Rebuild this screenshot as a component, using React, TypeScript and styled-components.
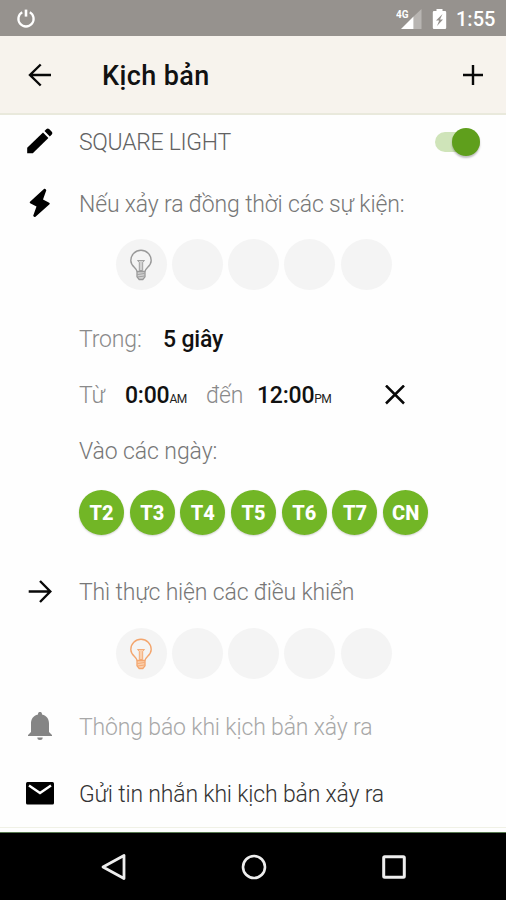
import React from "react";
import styled, { createGlobalStyle } from "styled-components";

const GlobalStyle = createGlobalStyle`
  * { box-sizing: border-box; }
  body { margin: 0; background: #fefefe; font-family: Roboto, "Noto Sans", sans-serif; }
  svg { display: block; flex: none; }
`;

const Screen = styled.div`
  width: 506px;
  height: 900px;
  display: flex;
  flex-direction: column;
  overflow: hidden;
  background: #fefefe;
`;

const StatusBar = styled.div`
  height: 36px;
  flex: none;
  display: flex;
  align-items: center;
  padding: 1px 11px 0 16px;
  background: #96928e;
  color: #fff;
`;

const StatusIcons = styled.div`
  margin-left: auto;
  display: flex;
  align-items: center;
  gap: 9px;
`;

const Clock = styled.span`
  width: 39px;
  font-size: 20px;
  line-height: 24px;
  font-weight: 500;
  white-space: nowrap;
`;

const Header = styled.header`
  height: 79px;
  flex: none;
  display: flex;
  align-items: center;
  padding: 1px 22px 0 28px;
  background: #f7f3ed;
  border-bottom: 2px solid #e9e9dc;
`;

const Title = styled.h1`
  margin: 1px auto 0 50px;
  font-size: 27px;
  line-height: 32px;
  font-weight: 500;
  letter-spacing: 0.4px;
  color: #111;
`;

const Content = styled.main`
  height: 713px;
  flex: none;
  display: flex;
  flex-direction: column;
  border-bottom: 1px solid #f0f1e6;
`;

const Row = styled.div<{ $h: number; $top?: number }>`
  height: ${(p) => p.$h}px;
  margin-top: ${(p) => p.$top ?? 0}px;
  flex: none;
  display: flex;
  align-items: center;
  padding-right: 25px;
`;

const IconSlot = styled.div`
  width: 79px;
  flex: none;
  display: flex;
  justify-content: center;
`;

const Label = styled.span<{ $color?: string; $spacing?: number }>`
  padding-top: 2px;
  font-size: 23px;
  line-height: 30px;
  font-weight: 300;
  white-space: pre;
  color: ${(p) => p.$color ?? "#777"};
  letter-spacing: ${(p) => p.$spacing ?? -0.16}px;
`;

const Field = styled.div<{ $w: number }>`
  width: ${(p) => p.$w}px;
  display: flex;
  align-items: baseline;
`;

const Value = styled.span`
  padding-top: 2px;
  font-size: 23px;
  line-height: 30px;
  font-weight: 500;
  letter-spacing: -0.2px;
  color: #111;
  white-space: nowrap;
`;

const Meridiem = styled.small`
  font-size: 12px;
  font-weight: 400;
  color: #222;
  letter-spacing: -0.6px;
`;

const Track = styled.div`
  width: 45px;
  height: 20px;
  margin: 0 1px 0 auto;
  display: flex;
  align-items: center;
  justify-content: flex-end;
  border-radius: 10px;
  background: #cfe4b9;
`;

const Thumb = styled.div`
  width: 28px;
  height: 28px;
  flex: none;
  border-radius: 50%;
  background: #5f9f1c;
  box-shadow: 0 2px 2px rgba(0, 0, 0, 0.25);
`;

const Slots = styled.div<{ $top?: number }>`
  margin-top: ${(p) => p.$top ?? 0}px;
  flex: none;
  display: flex;
  gap: 5.3px;
  padding-left: 115.5px;
`;

const Slot = styled.div`
  width: 51px;
  height: 51px;
  display: flex;
  align-items: center;
  justify-content: center;
  border-radius: 50%;
  background: #f4f4f4;
`;

const Days = styled.div`
  height: 67px;
  flex: none;
  display: flex;
  align-items: center;
  gap: 5.7px;
  padding-left: 79px;
`;

const Day = styled.div`
  width: 45px;
  height: 45px;
  display: flex;
  align-items: center;
  justify-content: center;
  border-radius: 50%;
  background: #72b626;
  color: #fff;
  font-size: 20px;
  font-weight: 800;
  box-shadow: 0 1px 2px rgba(0, 0, 0, 0.18);
`;

const NavBar = styled.nav`
  height: 68px;
  margin-top: auto;
  flex: none;
  display: flex;
  align-items: center;
  justify-content: center;
  gap: 114px;
  border-top: 1px solid #587a50;
  background: #000;
`;

const Bulb = ({ color, fill }: { color: string; fill: string }) => (
  <svg width="24" height="32" viewBox="0 0 24 32" fill="none" stroke={color}>
    <path d="M8 22.500C7.800 19 1.800 17.500 1.800 11.500a10.200 10.200 0 0 1 20.400 0c0 6-6 7.500-6.200 11" strokeWidth="1.400" />
    <path d="M8.500 11.500h7l-1.800 2v8h-3.400v-8z" fill={fill} strokeWidth=".9" />
    <path d="M8 22.500h8v5.300l-2.200 2.700h-3.600L8 27.800z" fill={fill} strokeWidth="1.300" />
    <path d="M8.500 25.500l7-1M8.500 28l7-1" strokeWidth=".9" />
  </svg>
);

const Arrow = ({ flip }: { flip?: boolean }) => (
  <svg width="24" height="24" viewBox="0 0 24 24" fill="none" stroke="#080808" strokeWidth="2.400">
    <path d={flip ? "M.7 11.500H22M12 1L22.300 11.500 12 22" : "M23 12H2M12.700 1.500L2 12l10.700 10.500"} />
  </svg>
);

const DAYS = ["T2", "T3", "T4", "T5", "T6", "T7", "CN"];

const SlotRow = ({ top, color, fill }: { top?: number; color: string; fill: string }) => (
  <Slots $top={top}>
    <Slot><Bulb color={color} fill={fill} /></Slot>
    {[1, 2, 3, 4].map((i) => <Slot key={i} />)}
  </Slots>
);

export default function App() {
  return (
    <Screen>
      <GlobalStyle />
      <StatusBar>
        <svg width="20" height="20" viewBox="0 0 20 20" fill="none" stroke="#fff" strokeWidth="2.300">
          <path d="M6.200 3.300a7.600 7.600 0 1 0 7.600 0" />
          <path d="M10 .6v7" strokeWidth="2.600" />
        </svg>
        <StatusIcons>
          <svg width="27" height="22" viewBox="0 0 27 22">
            <text x="0" y="9.500" fontSize="11.500" fontWeight="700" fill="#fff" textLength="12.500" lengthAdjust="spacingAndGlyphs">4G</text>
            <path d="M17.500 8.500L25.500 1v20h-8z" fill="#b8b5b2" />
            <path d="M5 21L17.500 8.500V21z" fill="#fff" />
          </svg>
          <svg width="15" height="22" viewBox="0 0 15 22">
            <path d="M4.500 1h6v2H13q1.200 0 1.200 1.200v15.600Q14.200 21 13 21H2Q.8 21 .8 19.800V4.200Q.8 3 2 3h2.500z" fill="#fff" />
            <path d="M10.500 6L4 12.500h3.200L5 18l6-6.500H8z" fill="#96928e" />
          </svg>
          <Clock>1:55</Clock>
        </StatusIcons>
      </StatusBar>
      <Header>
        <Arrow />
        <Title>Kịch bản</Title>
        <svg width="22" height="22" viewBox="0 0 22 22" stroke="#080808" strokeWidth="2.400">
          <path d="M1 11h20M11 1v20" />
        </svg>
      </Header>
      <Content>
        <Row $h={54}>
          <IconSlot>
            <svg width="28" height="28" viewBox="0 0 28 28">
              <path d="M1.200 25.300v-5.500L17 4.500l5.400 5.400L6.800 25.300z" />
              <path d="M18.500 3.100l2-2q1.300-1.100 2.600 0l2.700 2.700q1.300 1.300 0 2.600l-2 2z" />
            </svg>
          </IconSlot>
          <Label $color="#626262" $spacing={-0.3}>SQUARE LIGHT</Label>
          <Track><Thumb /></Track>
        </Row>
        <Row $h={70}>
          <IconSlot>
            <svg width="22" height="32" viewBox="0 0 22 32">
              <path d="M15.200.8L1 13.700q-.8.900.2 1.500l6.300 3.300L4.200 27.800q.5 1.600 2.300.9L20.500 16.300q.8-.9-.3-1.500L14 11.600 17.300 2.300q-.4-1.800-2.100-1.500z" />
            </svg>
          </IconSlot>
          <Label>Nếu xảy ra đồng thời các sự kiện:</Label>
        </Row>
        <SlotRow color="#999" fill="#d2d2d2" />
        <Row $h={56} $top={21}>
          <IconSlot />
          <Field $w={84}><Label $color="#8a8a8a">Trong:</Label></Field>
          <Value>5 giây</Value>
        </Row>
        <Row $h={56}>
          <IconSlot />
          <Field $w={46}><Label $color="#8a8a8a">Từ</Label></Field>
          <Field $w={81}><Value>0:00</Value><Meridiem>AM</Meridiem></Field>
          <Field $w={51}><Label $color="#8a8a8a">đến</Label></Field>
          <Field $w={128}><Value>12:00</Value><Meridiem>PM</Meridiem></Field>
          <svg width="20" height="20" viewBox="0 0 20 20" stroke="#080808" strokeWidth="2.500">
            <path d="M1 .5l18 18M19 .5l-18 18" />
          </svg>
        </Row>
        <Row $h={56}>
          <IconSlot />
          <Label $spacing={-0.1}>Vào các ngày:</Label>
        </Row>
        <Days>{DAYS.map((d) => <Day key={d}>{d}</Day>)}</Days>
        <Row $h={56} $top={18}>
          <IconSlot><Arrow flip /></IconSlot>
          <Label>Thì thực hiện các điều khiển</Label>
        </Row>
        <SlotRow top={8} color="#f3a56d" fill="#fbd0ae" />
        <Row $h={56} $top={20}>
          <IconSlot>
            <svg width="26" height="30" viewBox="0 0 26 30" fill="#858585">
              <path d="M11 2.500V1.900a2 2 0 0 1 4 0v.6c4.800 1 7 4.700 7 9.200v8.300l3 3v1H1v-1l3-3v-8.300c0-4.500 2.200-8.200 7-9.200z" />
              <path d="M10.300 25.400h5.400a2.700 2.500 0 0 1-5.400 0z" />
            </svg>
          </IconSlot>
          <Label $color="#a8a8a8">Thông báo khi kịch bản xảy ra</Label>
        </Row>
        <Row $h={56} $top={11}>
          <IconSlot>
            <svg width="28" height="24" viewBox="0 0 28 24">
              <rect x="0" y="0" width="28" height="22.500" rx="1.500" />
              <path d="M3 3.500l11 7.500 11-7.500" fill="none" stroke="#fff" strokeWidth="2.400" />
            </svg>
          </IconSlot>
          <Label $color="#333" $spacing={-0.18}>Gửi tin nhắn khi kịch bản xảy ra</Label>
        </Row>
      </Content>
      <NavBar>
        <svg width="27" height="28" viewBox="0 0 27 28" fill="none" stroke="#eee" strokeWidth="2.800" strokeLinejoin="round">
          <path d="M24 2.500v23L3 14z" />
        </svg>
        <svg width="26" height="26" viewBox="0 0 26 26" fill="none" stroke="#eee" strokeWidth="2.600">
          <circle cx="13" cy="13" r="11" />
        </svg>
        <svg width="26" height="26" viewBox="0 0 26 26" fill="none" stroke="#eee" strokeWidth="3">
          <rect x="2.700" y="2.700" width="20.600" height="20.600" rx="1" />
        </svg>
      </NavBar>
    </Screen>
  );
}
